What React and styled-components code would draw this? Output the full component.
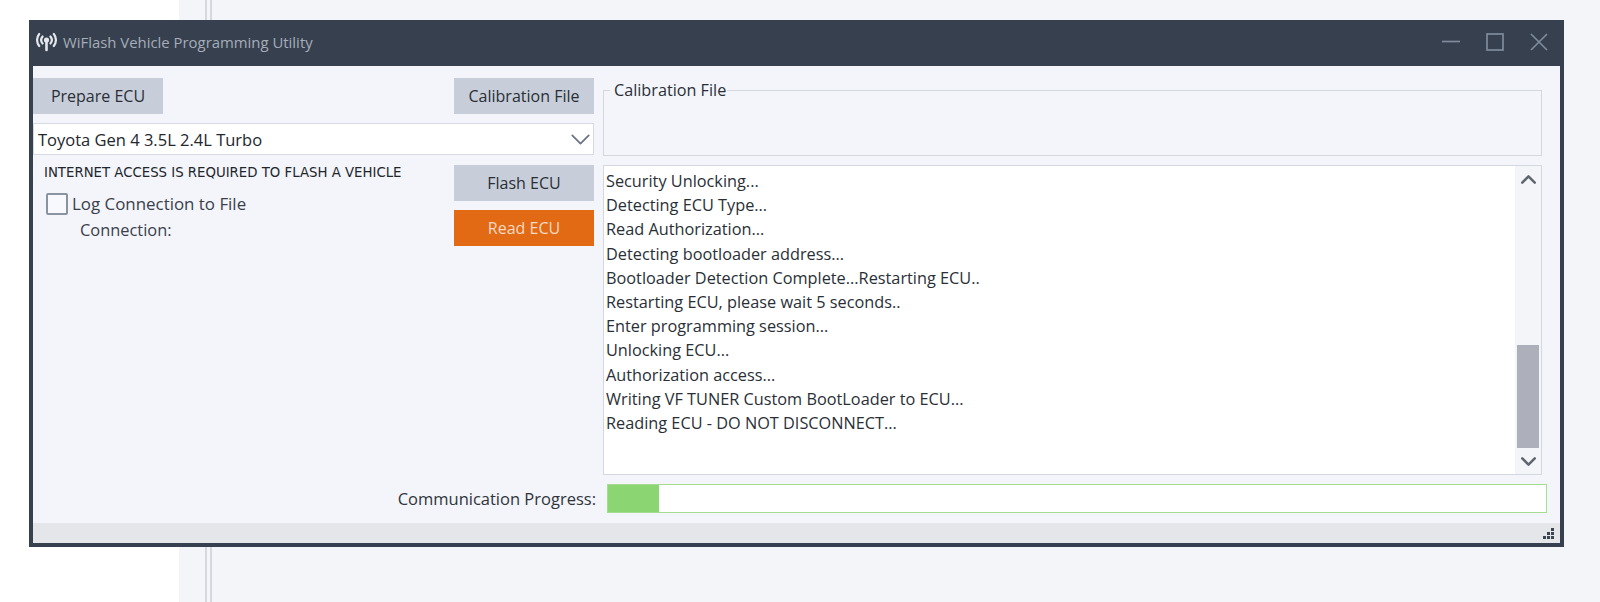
import React from 'react'
import styled, { createGlobalStyle } from 'styled-components'
import { ChevronDown, ChevronUp } from 'lucide-react'

const logLines = [
  'Security Unlocking...',
  'Detecting ECU Type...',
  'Read Authorization...',
  'Detecting bootloader address...',
  'Bootloader Detection Complete...Restarting ECU..',
  'Restarting ECU, please wait 5 seconds..',
  'Enter programming session...',
  'Unlocking ECU...',
  'Authorization access...',
  'Writing VF TUNER Custom BootLoader to ECU...',
  'Reading ECU - DO NOT DISCONNECT...',
]

const GlobalStyle = createGlobalStyle`
  html, body {
    margin: 0;
    padding: 0;
    height: 602px;
    overflow: hidden;
    font-family: "Open Sans", "Noto Sans", sans-serif;
  }
`

const Page = styled.div`
  width: 1600px;
  height: 602px;
  box-sizing: border-box;
  padding: 20px 0 0 29px;
  background:
    linear-gradient(#d5d8de, #d5d8de) 205px 0 / 2px 100% no-repeat,
    linear-gradient(#d5d8de, #d5d8de) 210px 0 / 2px 100% no-repeat,
    linear-gradient(#ffffff, #ffffff) 0 0 / 179px 100% no-repeat,
    #f3f5f9;
`

const Window = styled.div`
  width: 1535px;
  height: 527px;
  box-sizing: border-box;
  display: flex;
  flex-direction: column;
  border: solid #36404f;
  border-width: 0 4px 4px;
  background: #f3f5fa;
`

const TitleBar = styled.div`
  height: 46px;
  flex: none;
  margin: 0 -4px;
  padding: 0 16px 2px 7px;
  box-sizing: border-box;
  display: flex;
  align-items: center;
  background: #36404f;
`

const AppIcon = styled.svg`
  width: 21px;
  height: 20px;
  margin-right: 6px;
`

const Title = styled.div`
  flex: 1;
  font-size: 14.9px;
  color: #a6adb8;
`

const WindowControls = styled.div`
  display: flex;
  gap: 26px;
`

const WindowGlyph = styled.svg`
  width: 18px;
  height: 18px;
  fill: none;
  stroke: #7f8b9b;
  stroke-width: 1.7;
`

const Body = styled.div`
  flex: 1;
  min-height: 0;
  display: grid;
  grid-template-columns: 561px 939px 1fr;
  grid-template-rows: 87px 319px 1fr;
  column-gap: 9px;
  padding-top: 12px;
`

const SetupPane = styled.div`
  display: flex;
  flex-direction: column;
`

const ButtonRow = styled.div`
  display: flex;
  justify-content: space-between;
  height: 36px;
`

const ActionButton = styled.button`
  width: ${(p) => p.$width}px;
  height: 36px;
  padding: 0;
  border: 0;
  font-family: inherit;
  font-size: 16px;
  color: ${(p) => (p.$primary ? '#f6d9c4' : '#2a2f37')};
  background: ${(p) => (p.$primary ? '#e26a15' : '#c8ced9')};
`

const Combo = styled.div`
  height: 32px;
  margin-top: 9px;
  box-sizing: border-box;
  padding: 0 0 0 4px;
  display: flex;
  align-items: center;
  justify-content: space-between;
  border: 1px solid #d6dae1;
  background: #ffffff;
  font-size: 16.5px;
  color: #23272e;
  svg {
    margin-right: -4px;
    color: #6b7280;
  }
`

const GroupBox = styled.fieldset`
  height: 75px;
  box-sizing: border-box;
  margin: 3px 0 0;
  padding: 0;
  border: 1px solid #d3d7de;
  legend {
    margin-left: 6px;
    padding: 0 1px 0 4px;
    font-size: 16.2px;
    line-height: 19px;
    color: #2a2f37;
  }
`

const ControlsPane = styled.div`
  display: grid;
  grid-template-columns: 421px 140px;
`

const ConnectionInfo = styled.div`
  padding-left: 11px;
`

const Notice = styled.div`
  font-family: "DejaVu Sans", sans-serif;
  font-size: 13.3px;
  line-height: 16px;
  color: #22262c;
`

const CheckRow = styled.label`
  margin: 12px 0 0 2px;
  display: flex;
  align-items: center;
  gap: 4px;
  font-size: 16.9px;
  line-height: 22px;
  color: #3a404a;
`

const Box = styled.span`
  width: 22px;
  height: 22px;
  box-sizing: border-box;
  border: 2px solid #8a93a0;
  border-radius: 2px;
  background: #f8f9fc;
`

const ConnectionLabel = styled.div`
  margin: 4px 0 0 36px;
  font-size: 16.4px;
  line-height: 22px;
  color: #3a404a;
`

const ActionStack = styled.div`
  display: flex;
  flex-direction: column;
  gap: 9px;
`

const LogBox = styled.div`
  height: 310px;
  box-sizing: border-box;
  display: flex;
  border: 1px solid #d3d7de;
  background: #ffffff;
`

const LogLines = styled.div`
  flex: 1;
  padding: 3px 0 0 2px;
  font-size: 16.3px;
  line-height: 24.2px;
  color: #2a2f37;
`

const ScrollBar = styled.div`
  width: 26px;
  display: flex;
  flex-direction: column;
  align-items: center;
  background: #f3f5f9;
  color: #5f6670;
`

const ScrollArrow = styled.div`
  height: 26px;
  flex: none;
  display: flex;
  align-items: center;
  justify-content: center;
`

const ScrollTrack = styled.div`
  flex: 1;
  width: 100%;
  display: flex;
  flex-direction: column;
  justify-content: flex-end;
  align-items: center;
`

const ScrollThumb = styled.div`
  width: 22px;
  height: 103px;
  background: #adb0ba;
`

const ProgressRow = styled.div`
  grid-column: 1 / -1;
  display: flex;
  align-items: center;
  justify-content: flex-end;
  gap: 11px;
  height: 29px;
  padding-right: 13px;
  font-size: 16.5px;
  color: #2f343c;
`

const ProgressTrack = styled.div`
  width: 940px;
  height: 29px;
  box-sizing: border-box;
  border: 1px solid #a6dc90;
  background: #ffffff;
`

const ProgressFill = styled.div`
  height: 100%;
  background: #8bd672;
`

const StatusBar = styled.div`
  height: 20px;
  flex: none;
  display: flex;
  align-items: center;
  justify-content: flex-end;
  padding-right: 6px;
  background: #e5e6ea;
`

const Grip = () => (
  <svg width="13" height="13" viewBox="0 0 13 13" fill="#3d4551">
    <rect x="10" y="1" width="3" height="3" />
    <rect x="6" y="5" width="3" height="3" />
    <rect x="10" y="5" width="3" height="3" />
    <rect x="2" y="9" width="3" height="3" />
    <rect x="6" y="9" width="3" height="3" />
    <rect x="10" y="9" width="3" height="3" />
  </svg>
)

const App = () => {
  return (
    <Page>
      <GlobalStyle />
      <Window>
        <TitleBar>
          <AppIcon viewBox="0 0 21 20" fill="none" stroke="#e4e7ec" strokeWidth="2.2" strokeLinecap="round">
            <circle cx="10.5" cy="8" r="2.6" fill="#e4e7ec" stroke="none" />
            <path d="M10.5 9v9" strokeWidth="2.6" />
            <path d="M6.6 4.5a5.4 5.4 0 0 0 0 7M14.4 4.5a5.4 5.4 0 0 1 0 7" />
            <path d="M3.2 2a9.6 9.6 0 0 0 0 12M17.8 2a9.6 9.6 0 0 1 0 12" />
          </AppIcon>
          <Title>WiFlash Vehicle Programming Utility</Title>
          <WindowControls>
            <WindowGlyph viewBox="0 0 18 18"><path d="M0 8.5h18" /></WindowGlyph>
            <WindowGlyph viewBox="0 0 18 18"><rect x="1" y="1" width="16" height="16" /></WindowGlyph>
            <WindowGlyph viewBox="0 0 18 18"><path d="M1 1l16 16M17 1L1 17" /></WindowGlyph>
          </WindowControls>
        </TitleBar>
        <Body>
          <SetupPane>
            <ButtonRow>
              <ActionButton $width={130}>Prepare ECU</ActionButton>
              <ActionButton $width={140}>Calibration File</ActionButton>
            </ButtonRow>
            <Combo>
              Toyota Gen 4 3.5L 2.4L Turbo
              <ChevronDown size={33} strokeWidth={1.7} absoluteStrokeWidth />
            </Combo>
          </SetupPane>
          <GroupBox>
            <legend>Calibration File</legend>
          </GroupBox>
          <span />
          <ControlsPane>
            <ConnectionInfo>
              <Notice>INTERNET ACCESS IS REQUIRED TO FLASH A VEHICLE</Notice>
              <CheckRow>
                <Box />
                Log Connection to File
              </CheckRow>
              <ConnectionLabel>Connection:</ConnectionLabel>
            </ConnectionInfo>
            <ActionStack>
              <ActionButton $width={140}>Flash ECU</ActionButton>
              <ActionButton $width={140} $primary>Read ECU</ActionButton>
            </ActionStack>
          </ControlsPane>
          <LogBox>
            <LogLines>
              {logLines.map((line) => (
                <div key={line}>{line}</div>
              ))}
            </LogLines>
            <ScrollBar>
              <ScrollArrow><ChevronUp size={25} strokeWidth={2.5} absoluteStrokeWidth /></ScrollArrow>
              <ScrollTrack><ScrollThumb /></ScrollTrack>
              <ScrollArrow><ChevronDown size={25} strokeWidth={2.5} absoluteStrokeWidth /></ScrollArrow>
            </ScrollBar>
          </LogBox>
          <span />
          <ProgressRow>
            Communication Progress:
            <ProgressTrack>
              <ProgressFill style={{ width: `${(51 / 940) * 100}%` }} />
            </ProgressTrack>
          </ProgressRow>
        </Body>
        <StatusBar><Grip /></StatusBar>
      </Window>
    </Page>
  )
}

export default App
